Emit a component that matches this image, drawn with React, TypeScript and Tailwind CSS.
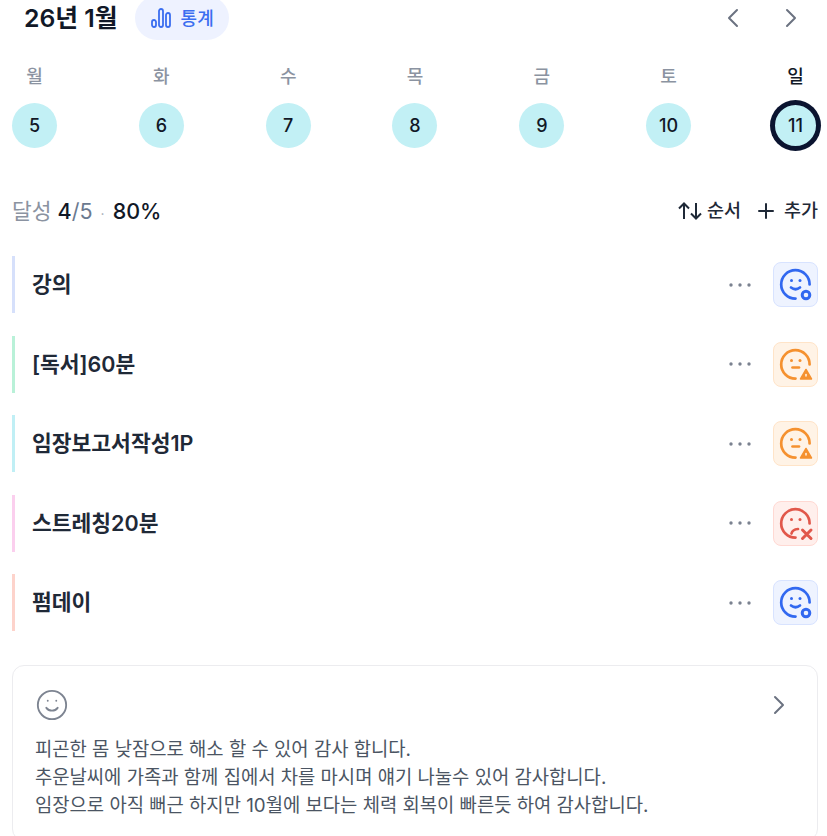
import { ChevronLeft, ChevronRight, Plus, Smile } from 'lucide-react'

const days = [
  { label: '월', date: 5 },
  { label: '화', date: 6 },
  { label: '수', date: 7 },
  { label: '목', date: 8 },
  { label: '금', date: 9 },
  { label: '토', date: 10 },
  { label: '일', date: 11, today: true },
]

type Status = 'good' | 'warn' | 'bad'

const habits: { name: string; bar: string; status: Status }[] = [
  { name: '강의', bar: 'bg-[#d6e0fb]', status: 'good' },
  { name: '[독서]60분', bar: 'bg-[#b9f1d8]', status: 'warn' },
  { name: '임장보고서작성1P', bar: 'bg-[#c0eff5]', status: 'warn' },
  { name: '스트레칭20분', bar: 'bg-[#fbcfee]', status: 'bad' },
  { name: '펌데이', bar: 'bg-[#fdd3cb]', status: 'good' },
]

function MoodIcon({ status }: { status: Status }) {
  return (
    <svg viewBox="0 0 45 45" className="size-[45px] shrink-0" fill="none" stroke="currentColor" strokeWidth="2.700" strokeLinecap="round">
      <path d="M36.6 22.500A14.200 14.200 0 1 0 22.500 36.600" />
      <circle cx="18.500" cy="18.500" r="1.500" fill="currentColor" stroke="none" />
      <circle cx="27" cy="18.500" r="1.500" fill="currentColor" stroke="none" />
      {status === 'good' && (
        <>
          <path d="M18 25.500q4.500 3.500 9 0" />
          <circle cx="33" cy="33" r="3.800" strokeWidth="3" />
        </>
      )}
      {status === 'warn' && (
        <>
          <path d="M19.500 25.500h6.500" />
          <path d="M33 27.500l5.500 9.500h-11z" fill="currentColor" strokeWidth="1.500" strokeLinejoin="round" />
          <path d="M33 32.500v1.500" stroke="#fff3e6" strokeWidth="1.500" />
        </>
      )}
      {status === 'bad' && (
        <>
          <path d="M18.500 32.500q1-4 6.500-4.500" />
          <path d="M29.500 29l8.500 8.500M38 29l-8.500 8.500" strokeWidth="3" />
        </>
      )}
    </svg>
  )
}

const moodBox: Record<Status, string> = {
  good: 'bg-[#eef3ff] border-[#d8e3ff] text-[#3168f0]',
  warn: 'bg-[#fff3e6] border-[#ffe4c8] text-[#f5912f]',
  bad: 'bg-[#ffefec] border-[#ffd9d3] text-[#e1574a]',
}

export default function App() {
  return (
    <div className="-mt-1 h-[840px] overflow-hidden bg-white pr-[9px] pl-3 font-['Inter','Noto_Sans_CJK_KR',sans-serif] text-[#111827]">
      <div className="flex h-11 items-center justify-between">
        <div className="flex items-center gap-[17.500px] pl-3">
          <h2 className="mt-[2px] text-[24.800px] font-semibold">26년 1월</h2>
          <div className="flex h-11 w-[94px] items-center justify-center gap-2.5 rounded-full bg-[#eef2ff] text-[18px] font-medium text-[#3b6ef0]">
            <svg viewBox="0 0 20 20" className="size-5" fill="none" stroke="currentColor" strokeWidth="1.800">
              <rect x="1" y="12" width="4" height="7" rx="2" />
              <rect x="8" y="1" width="4" height="18" rx="2" />
              <rect x="15" y="5" width="4" height="14" rx="2" />
            </svg>
            통계
          </div>
        </div>
        <div className="flex items-center gap-[26px] pr-[11px] text-[#6b7280]">
          <ChevronLeft className="size-8" strokeWidth={1.500} />
          <ChevronRight className="size-8" strokeWidth={1.500} />
        </div>
      </div>

      <div className="mt-[25px] flex justify-between">
        {days.map((d) => (
          <div key={d.date} className="flex w-[45px] flex-col items-center">
            <span className={`text-[18px] leading-6 font-medium ${d.today ? 'text-[#111827]' : 'text-[#8b93a1]'}`}>{d.label}</span>
            <div
              className={`mt-[14px] flex size-[45px] items-center justify-center rounded-full bg-[#c2f0f5] text-[18px] font-medium ${
                d.today ? 'border-2 border-[#0b1430] ring-[3px] ring-[#0b1430]' : ''
              }`}
            >
              {d.date}
            </div>
          </div>
        ))}
      </div>

      <div className="mt-[49px] flex h-7 items-center justify-between">
        <div className="text-[21.500px]">
          <span className="text-[#8b93a1]">달성</span> <span className="font-medium">4</span>
          <span className="text-[#6b7a90]">/5</span> <span className="mx-[2px] text-[14px] text-[#a3aab5]">·</span>{' '}
          <span className="font-medium">80%</span>
        </div>
        <div className="flex items-center gap-[13px] text-[18.500px] font-medium text-[#1f2937]">
          <div className="flex items-center gap-[5px]">
            <svg viewBox="0 0 24 24" className="size-6" fill="none" stroke="currentColor" strokeWidth="2">
              <path d="M6 20V4.500M1 9.500l5-5 5 5" />
              <path d="M18 4v15.500M13 14.500l5 5 5-5" />
            </svg>
            순서
          </div>
          <div className="flex items-center gap-[6px]">
            <Plus className="size-6" strokeWidth={2} />
            추가
          </div>
        </div>
      </div>

      <div className="mt-[31px] flex flex-col gap-[22.500px]">
        {habits.map((h) => (
          <div key={h.name} className="flex h-[57px] items-center">
            <div className={`h-full w-[3px] ${h.bar}`} />
            <span className="ml-[17px] flex-1 text-[21.500px] font-semibold text-[#1f2937]">{h.name}</span>
            <svg viewBox="0 0 24 24" className="mr-[21.500px] size-6 fill-[#7b8290]">
              <circle cx="3" cy="12" r="1.700" />
              <circle cx="12" cy="12" r="1.700" />
              <circle cx="21" cy="12" r="1.700" />
            </svg>
            <div className={`flex size-[45px] items-center justify-center rounded-lg border ${moodBox[h.status]}`}>
              <MoodIcon status={h.status} />
            </div>
          </div>
        ))}
      </div>

      <div className="mt-[34px] rounded-xl border border-[#ececef] px-[22px] pt-[22px] pb-5">
        <div className="flex items-center justify-between">
          <Smile className="size-[34px] text-[#7d8491]" strokeWidth={1.300} />
          <ChevronRight className="size-8 text-[#6b7280]" strokeWidth={1.500} />
        </div>
        <p className="mt-[14px] text-[18.800px] leading-7 text-[#4b5563]">
          피곤한 몸 낮잠으로 해소 할 수 있어 감사 합니다.
          <br />
          추운날씨에 가족과 함께 집에서 차를 마시며 얘기 나눌수 있어 감사합니다.
          <br />
          임장으로 아직 뻐근 하지만 10월에 보다는 체력 회복이 빠른듯 하여 감사합니다.
        </p>
      </div>
    </div>
  )
}
